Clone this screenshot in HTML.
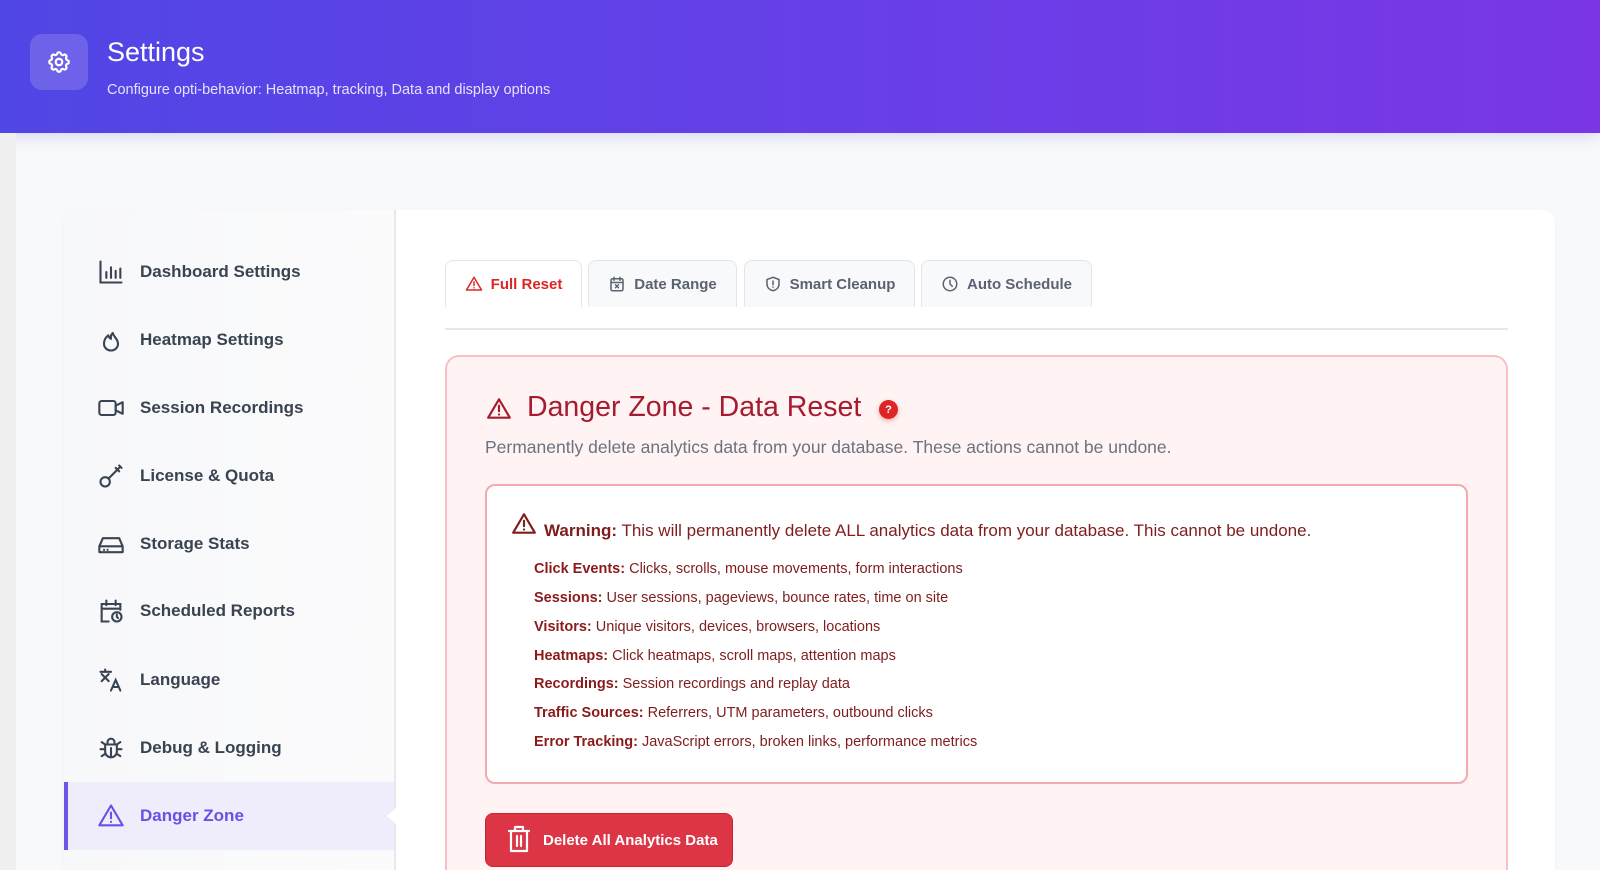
<!DOCTYPE html>
<html style="overflow:hidden;width:1600px;height:870px"><head><meta charset="utf-8"><style>
*{box-sizing:border-box;margin:0;padding:0}
body{width:1600px;height:870px;overflow:hidden;background:#f8f9fb;font-family:"Liberation Sans",sans-serif;position:relative}
.lstrip{position:absolute;left:0;top:133px;width:16px;height:737px;background:#f0f0f1}
.hdr{position:absolute;left:0;top:0;width:1600px;height:133px;background:linear-gradient(90deg,#5046e5,#6a3ee8 60%,#7a36e4);box-shadow:0 4px 14px rgba(80,70,229,.18)}
.hicon{position:absolute;left:30px;top:34px;width:58px;height:56px;border-radius:12px;background:rgba(255,255,255,.16);display:flex;align-items:center;justify-content:center}
.htitle{position:absolute;left:107px;top:37px;color:#fff;font-size:27px}
.hsub{position:absolute;left:107px;top:82px;color:#e6e1ff;font-size:14.5px}
.card{position:absolute;left:64px;top:210px;width:1491px;height:660px;background:#fff;border-radius:12px 12px 0 0;box-shadow:0 1px 4px rgba(0,0,0,.04)}
.side{position:absolute;left:64px;top:210px;width:332px;height:660px;background:linear-gradient(90deg,#f7f8fa,#fbfbfc);border-right:2px solid #e8e9ee;border-top-left-radius:12px}
.item{position:absolute;left:0;width:330px;height:68px;display:flex;align-items:center;color:#3a4351;font-size:17px;font-weight:600}
.item svg{position:absolute;left:33px}
.item span{position:absolute;left:76px}
.item.act{background:#efecfb;color:#6b4fe6;border-left:4px solid #6b57e6}
.item.act svg{left:29px}.item.act span{left:72px}
.notch{position:absolute;right:-2px;top:26px;width:0;height:0;border-top:8px solid transparent;border-bottom:8px solid transparent;border-right:9px solid #fff}
.tab{position:absolute;top:260px;height:47px;background:#f8f9fb;border:1px solid #e3e5ea;border-bottom:none;border-radius:8px 8px 0 0;display:flex;align-items:center;justify-content:center;gap:8px;color:#5b6270;font-size:15px;font-weight:600}
.tab.act{background:#fff;color:#dc2626}
.div{position:absolute;left:445px;top:328px;width:1063px;height:2px;background:#e5e7eb}
.panel{position:absolute;left:445px;top:355px;width:1063px;height:515px;background:#fff3f3;border:2px solid #f8c0c4;border-bottom:none;border-radius:14px 14px 0 0}
.ptitle{position:absolute;left:527px;top:391px;font-size:28.5px;color:#a51c30;font-weight:500}
.q{position:absolute;left:879px;top:400px;width:19px;height:19px;border-radius:50%;background:#dc2626;color:#fff;font-size:11px;font-weight:700;display:flex;align-items:center;justify-content:center;box-shadow:0 2px 5px rgba(220,38,38,.35)}
.pdesc{position:absolute;left:485px;top:437px;font-size:17.5px;color:#6b7280}
.wbox{position:absolute;left:485px;top:484px;width:983px;height:300px;background:#fff;border:2px solid #f3a9b1;border-radius:10px}
.wline{position:absolute;left:544px;top:521px;font-size:17px;color:#7f1d1d}
.li{position:absolute;left:534px;font-size:14.5px;color:#7f1d1d}
.li b{color:#8b1a1a}
.btn{position:absolute;left:485px;top:813px;width:248px;height:54px;background:#dc3545;border-radius:8px;border:1px solid #c82333;color:#fff;font-weight:700;font-size:15px}
.btn span{position:absolute;left:57px;top:18px}
.btn svg{position:absolute;left:21px;top:11px}
</style></head><body>
<div class="hdr">
 <div class="hicon"><svg width="26" height="26" viewBox="0 0 24 24" fill="none" stroke="#fff" stroke-width="2" stroke-linecap="round" stroke-linejoin="round"><path d="M10.3 4.3c.4-1.7 2.9-1.7 3.4 0a1.7 1.7 0 0 0 2.6 1.1c1.5-.9 3.3.8 2.4 2.4a1.7 1.7 0 0 0 1 2.5c1.8.4 1.8 2.9 0 3.4a1.7 1.7 0 0 0-1 2.6c.9 1.5-.9 3.3-2.4 2.4a1.7 1.7 0 0 0-2.6 1c-.4 1.800-2.9 1.8-3.4 0a1.7 1.7 0 0 0-2.5-1c-1.6.9-3.3-.9-2.4-2.4a1.7 1.7 0 0 0-1.1-2.6c-1.7-.4-1.7-2.9 0-3.4a1.7 1.7 0 0 0 1.1-2.5c-.9-1.6.8-3.3 2.4-2.400 1 .6 2.3.1 2.5-1.1z"/><circle cx="12" cy="12" r="3"/></svg></div>
 <div class="htitle">Settings</div>
 <div class="hsub">Configure opti-behavior: Heatmap, tracking, Data and display options</div>
</div>
<div class="lstrip"></div>
<div class="card"></div>
<div class="side">
 <div class="item" style="top:28px"><svg width="28" height="28" viewBox="0 0 24 24" fill="none" stroke="#3a4351" stroke-width="1.8" stroke-linecap="round"><path d="M3 3v18h18M8 17v-5M12 17V8M16 17v-6M20 17V9"/></svg><span>Dashboard Settings</span></div>
 <div class="item" style="top:96px"><svg width="28" height="28" viewBox="0 0 24 24" fill="none" stroke="#3a4351" stroke-width="1.8" stroke-linecap="round" stroke-linejoin="round"><path d="M12 21c3.3 0 6-2.5 6-5.8 0-3.8-3.5-5.7-4.5-9.2-1.5 1.5-2 3-1.5 5-1-.5-2-1.5-2.3-3C7 10 6 12.5 6 15.2 6 18.5 8.7 21 12 21z"/></svg><span>Heatmap Settings</span></div>
 <div class="item" style="top:164px"><svg width="28" height="28" viewBox="0 0 24 24" fill="none" stroke="#3a4351" stroke-width="1.8" stroke-linejoin="round"><rect x="2" y="6" width="14" height="12" rx="2"/><path d="M16 10l6-3v10l-6-3z"/></svg><span>Session Recordings</span></div>
 <div class="item" style="top:232px"><svg width="28" height="28" viewBox="0 0 24 24" fill="none" stroke="#3a4351" stroke-width="1.8" stroke-linecap="round"><circle cx="7" cy="17" r="4"/><path d="M10 14l9-9M16 5l3 3M19 3l2 2"/></svg><span>License &amp; Quota</span></div>
 <div class="item" style="top:300px"><svg width="28" height="28" viewBox="0 0 24 24" fill="none" stroke="#3a4351" stroke-width="1.8" stroke-linejoin="round"><path d="M2 14l3-7h14l3 7v5H2z M2 14h20"/><path d="M6 17h.1M9 17h.1" stroke-linecap="round"/></svg><span>Storage Stats</span></div>
 <div class="item" style="top:367px"><svg width="28" height="28" viewBox="0 0 24 24" fill="none" stroke="#3a4351" stroke-width="1.8" stroke-linecap="round"><path d="M10 21H4V6h16v5M4 10h16M8 3v4M16 3v4"/><circle cx="17" cy="17" r="4"/><path d="M17 15v2l1 1"/></svg><span>Scheduled Reports</span></div>
 <div class="item" style="top:436px"><svg width="28" height="28" viewBox="0 0 24 24" fill="none" stroke="#3a4351" stroke-width="1.8" stroke-linecap="round"><path d="M3 5h9M7 3v2M4 7l6 6M10 7l-6 6M12 21l4-9 4 9M13.5 18h5"/></svg><span>Language</span></div>
 <div class="item" style="top:504px"><svg width="28" height="28" viewBox="0 0 24 24" fill="none" stroke="#3a4351" stroke-width="1.8" stroke-linecap="round"><path d="M9 9V7a3 3 0 0 1 6 0v2M7 9h10v6a5 5 0 0 1-10 0zM3 13h4M17 13h4M4 19l3-2M20 19l-3-2M4 7l3 2M20 7l-3 2M12 12v7"/></svg><span>Debug &amp; Logging</span></div>
 <div class="item act" style="top:572px"><svg width="28" height="28" viewBox="0 0 24 24" fill="none" stroke="#6b4fe6" stroke-width="1.8" stroke-linecap="round" stroke-linejoin="round"><path d="M12 3L2 20h20z M12 9v5M12 17v.1"/></svg><span>Danger Zone</span><div class="notch"></div></div>
</div>
<div class="tab act" style="left:445px;width:137px"><svg width="18" height="18" viewBox="0 0 24 24" fill="none" stroke="#dc2626" stroke-width="2" stroke-linecap="round" stroke-linejoin="round"><path d="M12 3L2 20h20z M12 9v5M12 17v.1"/></svg>Full Reset</div>
<div class="tab" style="left:588px;width:149px"><svg width="18" height="18" viewBox="0 0 24 24" fill="none" stroke="#5b6270" stroke-width="2" stroke-linecap="round"><rect x="4" y="5" width="16" height="16" rx="2"/><path d="M4 10h16M8 3v4M16 3v4M10 13l4 4M14 13l-4 4"/></svg>Date Range</div>
<div class="tab" style="left:744px;width:171px"><svg width="18" height="18" viewBox="0 0 24 24" fill="none" stroke="#5b6270" stroke-width="2" stroke-linecap="round"><path d="M12 3l8 3v6c0 5-3.5 8-8 9-4.5-1-8-4-8-9V6z M12 8v5M12 16v.1"/></svg>Smart Cleanup</div>
<div class="tab" style="left:921px;width:171px"><svg width="18" height="18" viewBox="0 0 24 24" fill="none" stroke="#5b6270" stroke-width="2" stroke-linecap="round"><circle cx="12" cy="12" r="9"/><path d="M12 7v5l3 3"/></svg>Auto Schedule</div>
<div class="div"></div>
<div class="panel"></div>
<svg style="position:absolute;left:485px;top:396px" width="28" height="26" viewBox="0 0 24 24" fill="none" stroke="#a51c30" stroke-width="2" stroke-linecap="round" stroke-linejoin="round"><path d="M12 3L2 20h20z M12 9v5M12 17v.1"/></svg>
<div class="ptitle">Danger Zone - Data Reset</div>
<div class="q">?</div>
<div class="pdesc">Permanently delete analytics data from your database. These actions cannot be undone.</div>
<div class="wbox"></div>
<svg style="position:absolute;left:510px;top:511px" width="28" height="26" viewBox="0 0 24 24" fill="none" stroke="#7f1d1d" stroke-width="2" stroke-linecap="round" stroke-linejoin="round"><path d="M12 3L2 20h20z M12 9v5M12 17v.1"/></svg>
<div class="wline"><b>Warning:</b> This will permanently delete ALL analytics data from your database. This cannot be undone.</div>
<div class="li" style="top:561px"><b>Click Events:</b> Clicks, scrolls, mouse movements, form interactions</div>
<div class="li" style="top:590px"><b>Sessions:</b> User sessions, pageviews, bounce rates, time on site</div>
<div class="li" style="top:619px"><b>Visitors:</b> Unique visitors, devices, browsers, locations</div>
<div class="li" style="top:648px"><b>Heatmaps:</b> Click heatmaps, scroll maps, attention maps</div>
<div class="li" style="top:676px"><b>Recordings:</b> Session recordings and replay data</div>
<div class="li" style="top:705px"><b>Traffic Sources:</b> Referrers, UTM parameters, outbound clicks</div>
<div class="li" style="top:734px"><b>Error Tracking:</b> JavaScript errors, broken links, performance metrics</div>
<div class="btn"><svg width="24" height="28" viewBox="0 0 24 28" fill="none" stroke="#fff" stroke-width="2.2" stroke-linecap="round" stroke-linejoin="round"><path d="M2 6h20M8 6V2h8v4M4 6v20h16V6M10 11v10M14 11v10"/></svg><span>Delete All Analytics Data</span></div>
</body></html>
